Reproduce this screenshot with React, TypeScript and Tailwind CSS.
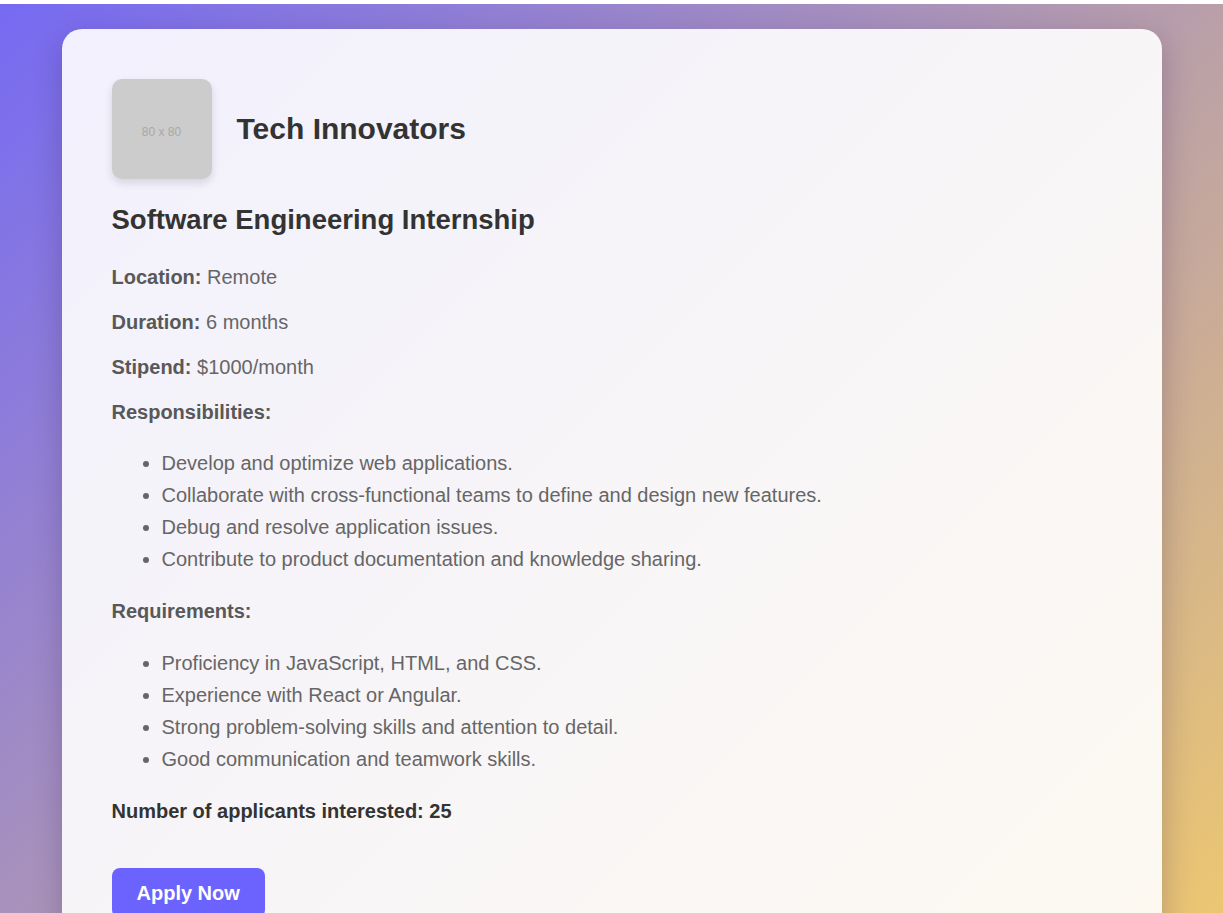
import React from "react";

const responsibilities = [
  "Develop and optimize web applications.",
  "Collaborate with cross-functional teams to define and design new features.",
  "Debug and resolve application issues.",
  "Contribute to product documentation and knowledge sharing.",
];

const requirements = [
  "Proficiency in JavaScript, HTML, and CSS.",
  "Experience with React or Angular.",
  "Strong problem-solving skills and attention to detail.",
  "Good communication and teamwork skills.",
];

export default function App() {
  return (
    <div className="bg-white pt-1 font-['Liberation_Sans',Arial,sans-serif]">
      <div className="min-h-screen bg-[linear-gradient(135deg,#766af3,#f0ca6d)] pt-[25px] pb-[25px]">
        <div className="mx-auto w-[1100px] rounded-[20px] bg-white/90 p-[50px] shadow-[0_10px_30px_rgba(40,20,80,0.25)]">
          <div className="flex items-center">
            <div className="flex h-[100px] w-[100px] items-center justify-center rounded-[10px] bg-[#cccccc] pt-[5px] text-[12px] text-[#a8a8a8] shadow-[0_4px_8px_rgba(0,0,0,0.12)]">
              80 x 80
            </div>
            <h1 className="ml-[25px] text-[30px] font-bold leading-[1.2] text-[#333333]">Tech Innovators</h1>
          </div>
          <h2 className="mt-[24px] text-[27.5px] font-bold leading-[34px] text-[#333333]">Software Engineering Internship</h2>
          <div className="text-[20px] leading-[29px] text-[#666666]">
            <p className="mt-[26px]">
              <span className="font-bold text-[#585858]">Location:</span> Remote
            </p>
            <p className="mt-4">
              <span className="font-bold text-[#585858]">Duration:</span> 6 months
            </p>
            <p className="mt-4">
              <span className="font-bold text-[#585858]">Stipend:</span> $1000/month
            </p>
            <p className="mt-4 font-bold text-[#585858]">Responsibilities:</p>
            <ul className="mt-[20px] list-disc pl-[50px]">
              {responsibilities.map((r) => (
                <li key={r} className="leading-8">{r}</li>
              ))}
            </ul>
            <p className="mt-[22px] font-bold text-[#585858]">Requirements:</p>
            <ul className="mt-[21px] list-disc pl-[50px]">
              {requirements.map((r) => (
                <li key={r} className="leading-8">{r}</li>
              ))}
            </ul>
            <p className="mt-[22px] font-bold text-[#333333]">Number of applicants interested: 25</p>
          </div>
          <button className="mt-[42px] h-[50px] rounded-[8px] bg-[#6c63ff] px-[25px] text-[20px] font-bold text-white">
            Apply Now
          </button>
        </div>
      </div>
    </div>
  );
}
